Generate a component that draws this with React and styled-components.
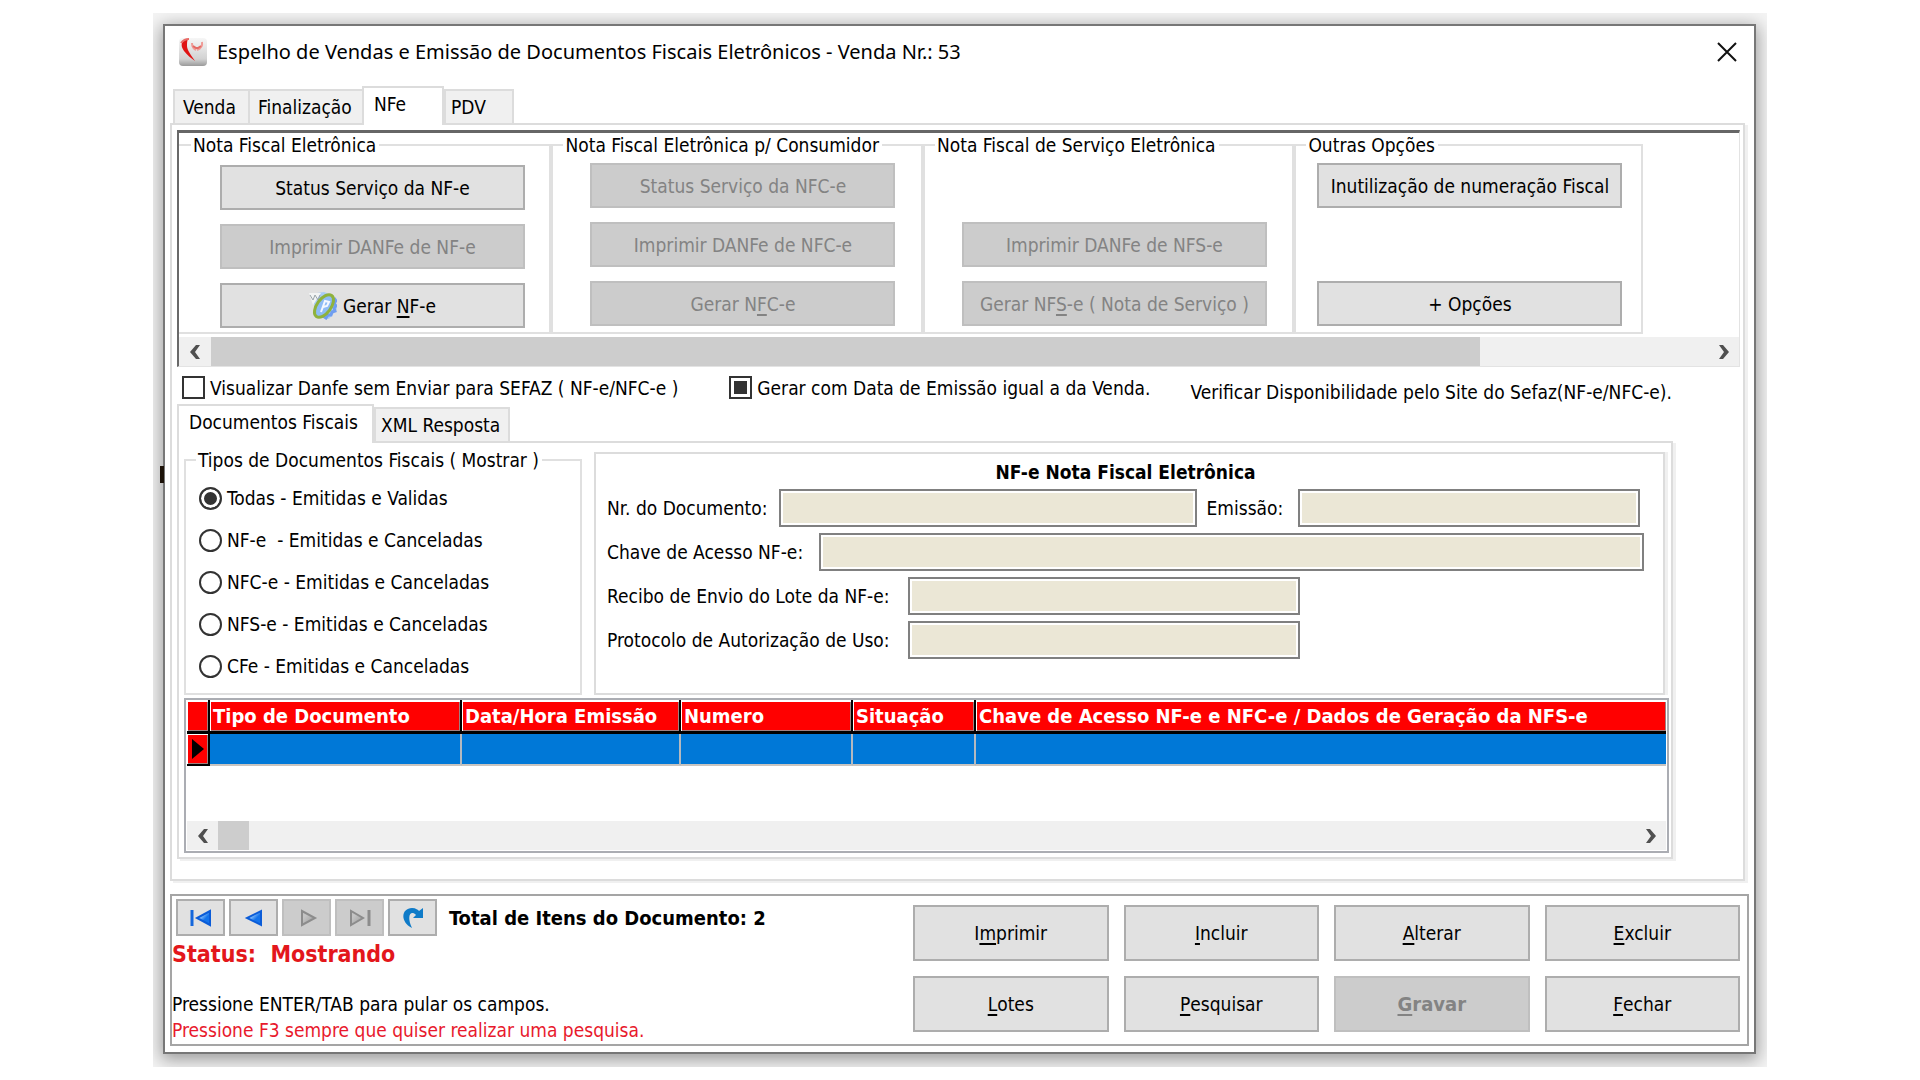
import React, { useState } from "react";
import styled, { createGlobalStyle, css } from "styled-components";

const Global = createGlobalStyle`
  * { box-sizing: border-box; }
  body {
    margin: 0;
    background: #fff;
    color: #000;
    font: 19px/24px "DejaVu Sans Condensed", "Noto Sans", sans-serif;
  }
  button, input { font: inherit; color: inherit; }
  u { text-decoration-thickness: 2px; text-underline-offset: 3px; text-decoration-skip-ink: none; }
`;

const Page = styled.div`
  padding: 13px 153px 14px;
`;

const Backdrop = styled.div`
  position: relative;
  overflow: hidden;
  padding: 11px 11px 13px 10px;
  background: #f4f4f4;
`;

const StrayMark = styled.span`
  position: absolute;
  left: 7px;
  top: 453px;
  width: 4px;
  height: 17px;
  background: #1c1208;
`;

const Window = styled.main`
  display: flex;
  flex-direction: column;
  border: 2px solid #777;
  background: #fff;
  box-shadow: 0 4px 16px 2px rgba(0, 0, 0, 0.36);
`;

const TitleBar = styled.header`
  display: flex;
  align-items: center;
  height: 60px;
  padding: 0 13px 8px;
`;

const Title = styled.h1`
  flex: 1;
  margin: 0 0 0 9px;
  font: 400 20px/28px "Noto Sans", sans-serif;
`;

const CloseButton = styled.button`
  display: flex;
  padding: 4px;
  border: 0;
  background: none;
`;

const TabList = styled.div`
  display: flex;
  align-items: flex-end;
  padding-left: ${(p) => p.$inset}px;
`;

const Tab = styled.button`
  width: ${(p) => p.$width}px;
  height: 34px;
  padding: 0 0 0 ${(p) => (p.$last ? 5 : 8)}px;
  border: 2px solid #dcdcdc;
  border-bottom: 0;
  border-right-width: ${(p) => (p.$last ? 2 : 0)}px;
  background: #f0f0f0;
  text-align: left;
  white-space: nowrap;
  ${(p) =>
    p.$active &&
    css`
      position: relative;
      height: 39px;
      margin-bottom: -2px;
      padding: 0 0 6px 10px;
      border-right-width: 2px;
      background: #fff;
    `}
`;

const TabPage = styled.section`
  margin: 0 9px 0 5px;
  padding: 5px 3px 20px 5px;
  border: 2px solid #dcdcdc;
  box-shadow: 3px 2px 0 #f0f0f0;
`;

const ScrollPane = styled.div`
  border: 1px solid #e3e3e3;
  border-top: 3px solid #666;
  border-left: 2px solid #696969;
`;

const Groups = styled.div`
  display: grid;
  grid-template-columns: 372fr 371fr 371fr 348fr 96fr;
  padding-bottom: 3px;
`;

const Group = styled.fieldset`
  display: grid;
  grid-template-rows: 45px 45px 45px;
  row-gap: 14px;
  min-width: 0;
  margin: 0;
  padding: ${(p) => p.$top || 6}px 0 4px ${(p) => p.$left}px;
  border: 2px solid #e0e0e0;
  border-left-width: ${(p) => (p.$open ? 0 : 2)}px;
`;

const Legend = styled.legend`
  margin-left: ${(p) => p.$shift}px;
  padding: 0 3px 0 2px;
  line-height: ${(p) => (p.$compact ? 20 : 24)}px;
  white-space: nowrap;
`;

const Button = styled.button`
  display: flex;
  align-items: center;
  justify-content: center;
  gap: 6px;
  width: ${(p) => (p.$fill ? "100%" : "305px")};
  height: 45px;
  padding: 0;
  grid-row: ${(p) => p.$row || "auto"};
  border: 2px solid #adadad;
  background: #e1e1e1;
  white-space: nowrap;
  &:disabled {
    border-color: #bfbfbf;
    background: #ccc;
    color: #838383;
  }
`;

const ScrollTrack = styled.div`
  display: grid;
  grid-template-columns: ${(p) => p.$columns};
  align-items: center;
  justify-items: center;
  height: 29px;
  background: #f0f0f0;
`;

const ScrollThumb = styled.span`
  align-self: stretch;
  justify-self: stretch;
  background: #cdcdcd;
`;

const OptionRow = styled.div`
  display: flex;
  align-items: center;
  height: 37px;
  padding: 4px 0 0 5px;
`;

const SiteNote = styled.span`
  padding-top: 8px;
  white-space: nowrap;
`;

const Choice = styled.label`
  display: flex;
  align-items: center;
  gap: 5px;
  margin-right: ${(p) => p.$after || 0}px;
  white-space: pre;
`;

const Mark = styled.input`
  appearance: none;
  width: 23px;
  height: 23px;
  margin: 0;
  border: 2px solid #333;
  border-radius: ${(p) => (p.type === "radio" ? "50%" : "0")};
  background: #fff;
  &:checked {
    background: #333;
    box-shadow: inset 0 0 0 3px #fff;
  }
`;

const SubTabs = styled.div`
  margin-right: 67px;
`;

const SubPage = styled.section`
  padding: 9px 2px 4px 5px;
  border: 2px solid #dcdcdc;
  box-shadow: 3px 2px 0 #f0f0f0;
`;

const Columns = styled.div`
  display: grid;
  grid-template-columns: 398px 1fr;
  column-gap: 12px;
  margin-right: 4px;
`;

const RadioGroup = styled.fieldset`
  display: flex;
  flex-direction: column;
  gap: 18px;
  margin: -2px 0 0;
  padding: 16px 0 15px 13px;
  border: 2px solid #e0e0e0;
`;

const Panel = styled.div`
  padding: 6px 19px 0 11px;
  border: 2px solid #dcdcdc;
  box-shadow: 3px 0 0 #f0f0f0;
`;

const PanelTitle = styled.h2`
  margin: 0 0 5px;
  font-size: 19px;
  line-height: 24px;
  text-align: center;
`;

const FieldRow = styled.div`
  display: grid;
  grid-template-columns: ${(p) => p.$columns};
  align-items: center;
  margin-bottom: 6px;
  white-space: nowrap;
`;

const FieldLabel = styled.label`
  padding-left: ${(p) => p.$inset || 0}px;
`;

const Field = styled.input`
  width: 100%;
  height: 38px;
  border: 2px solid #808080;
  background: #ebe7d6;
  box-shadow: inset 0 0 0 2px #fff;
`;

const GridBox = styled.div`
  margin-top: 3px;
  padding: 0 1px 1px;
  border: 2px solid #abadb3;
`;

const TableArea = styled.div`
  min-height: 121px;
`;

const Table = styled.table`
  width: 100%;
  table-layout: fixed;
  border-collapse: separate;
  border-spacing: 0;
`;

const HeadCell = styled.th`
  height: 34px;
  padding: 0 0 0 3px;
  border-right: ${(p) => (p.$last ? "0" : "2px solid #000")};
  border-bottom: 3px solid #000;
  background: #f00;
  box-shadow: inset 1px 2px 0 #fff, inset -1px -1px 0 #a08080;
  color: #fff;
  font-size: 20px;
  text-align: left;
  white-space: nowrap;
`;

const RowMarker = styled.th`
  height: 32px;
  padding: 0;
  border-right: 2px solid #000;
  border-bottom: 2px solid #000;
  background: #f00;
  box-shadow: inset 1px 1px 0 #fff, inset -1px -1px 0 #a08080;
  line-height: 0;
`;

const BodyCell = styled.td`
  padding: 0;
  border-right: ${(p) => (p.$last ? "0" : "2px solid #b4b9bf")};
  border-bottom: 2px solid #c8c4c0;
  background: #0078d7;
`;

const Footer = styled.footer`
  display: grid;
  grid-template-columns: 1fr 827px;
  margin: 13px 5px 6px;
  padding-right: 7px;
  border: 2px solid #a5a5a5;
`;

const FooterInfo = styled.div`
  display: flex;
  flex-direction: column;
  min-width: 0;
`;

const NavBar = styled.div`
  display: flex;
  align-items: center;
  gap: 4px;
  padding: 3px 0 0 4px;
`;

const NavButton = styled(Button)`
  width: 49px;
  height: 37px;
`;

const Total = styled.strong`
  margin-left: 8px;
  font-size: 20px;
  white-space: nowrap;
`;

const Status = styled.p`
  margin: 4px 0 0;
  color: #e3171b;
  font-weight: 700;
  font-size: 23px;
  line-height: 28px;
  white-space: pre;
`;

const Hint = styled.p`
  margin: ${(p) => p.$top}px 0 0;
  color: ${(p) => (p.$alert ? "#e8192c" : "#000")};
`;

const Actions = styled.div`
  display: grid;
  grid-template-columns: repeat(4, 1fr);
  gap: 15px;
  padding: 9px 0 12px;
`;

const ActionButton = styled(Button)`
  gap: 0;
  height: 56px;
  font-weight: ${(p) => (p.disabled ? 700 : 400)};
  font-size: ${(p) => (p.disabled ? 20 : 19)}px;
`;

const LogoIcon = () => (
  <svg width="30" height="30" viewBox="0 0 30 30" aria-hidden="true">
    <defs>
      <linearGradient id="logoFace" x1="0" y1="0" x2="0" y2="1">
        <stop offset="0" stopColor="#f6f6f6" />
        <stop offset="0.75" stopColor="#d2d2d2" />
        <stop offset="1" stopColor="#9a9a9a" />
      </linearGradient>
    </defs>
    <rect x="1" y="1" width="28" height="28" rx="4" fill="url(#logoFace)" />
    <path d="M10 2C3 4 2 8 6 14C9 18 13 21 17 24C13 18 9 13 9 9C9 6 9 4 10 2Z" fill="#e01414" />
    <path d="M3 6q3-4 8-4" fill="none" stroke="#e86a66" strokeWidth="2" />
    <path d="M14 6q0 5 4 7M24 5q1 6 -5 8" fill="none" stroke="#f09a96" strokeWidth="2" />
    <path d="M15 9l3 2 2 0 3-2" fill="none" stroke="#e46a64" strokeWidth="2" />
  </svg>
);

const NfeIcon = () => (
  <svg width="28" height="28" viewBox="0 0 28 28" aria-hidden="true">
    <path d="M1 2l14-2 10 4 3 13-8 10-10-2Z" fill="#a9cdf8" />
    <path d="M25 6l2 3-2 2 2 3-2 2 1 3-3 1-1 3-3 0-2 3-3-2" fill="none" stroke="#6f9df0" strokeWidth="3" />
    <path d="M0 1h12l-8 12Z" fill="#f2f4f4" />
    <path d="M1 3l3 5 2-5 3 5 2-5" fill="none" stroke="#9aa5ab" strokeWidth="1" />
    <ellipse cx="15" cy="14" rx="7" ry="13" transform="rotate(36 15 14)" fill="#8dbcf5" stroke="#8fb23c" strokeWidth="3" />
    <path d="M12 20l4-11 4 1-2 4-4 1" fill="none" stroke="#f4f8ff" strokeWidth="2" />
  </svg>
);

const CloseIcon = () => (
  <svg width="20" height="20" viewBox="0 0 20 20" aria-hidden="true">
    <path d="M1 1l18 18M19 1L1 19" stroke="#111" strokeWidth="2" />
  </svg>
);

const Chevron = ({ flip }) => (
  <svg width="12" height="14" viewBox="0 0 12 14" aria-hidden="true">
    <path d={flip ? "M1 0h4l6 7-6 7H1l5-7Z" : "M11 0H7L1 7l6 7h4L6 7Z"} fill="#505050" />
  </svg>
);

const NavIcon = ({ kind }) => {
  const blue = kind === "first" || kind === "prev";
  if (kind === "refresh")
    return (
      <svg width="22" height="22" viewBox="0 0 22 22" aria-hidden="true">
        <path d="M10 21C-3 14 0 1 10 1c4 0 6 2 7 3l4-3v10H11l3-3C9 3 4 8 10 21Z" fill="#0f7bc8" />
      </svg>
    );
  return (
    <svg width="22" height="18" viewBox="0 0 22 18" aria-hidden="true">
      <defs>
        <linearGradient id={"nav-" + kind} x1="0" y1="0" x2="1" y2="1">
          <stop offset="0.3" stopColor={blue ? "#9fd0ff" : "#c4c4c4"} />
          <stop offset="0.6" stopColor={blue ? "#1473ea" : "#b0b0b0"} />
        </linearGradient>
      </defs>
      {kind === "first" && <path d="M2 1v16" stroke="#1467dc" strokeWidth="3" />}
      {kind === "last" && <path d="M20 1v16" stroke="#8c8c8c" strokeWidth="3" />}
      {kind === "first" && <path d="M20 2v14L7 9Z" fill="url(#nav-first)" stroke="#0b5cd8" strokeWidth="2" />}
      {kind === "prev" && <path d="M18 2v14L4 9Z" fill="url(#nav-prev)" stroke="#0b5cd8" strokeWidth="2" />}
      {kind === "next" && <path d="M6 2v14L19 9Z" fill="url(#nav-next)" stroke="#8c8c8c" strokeWidth="2" />}
      {kind === "last" && <path d="M2 2v14L14 9Z" fill="url(#nav-last)" stroke="#8c8c8c" strokeWidth="2" />}
    </svg>
  );
};

const docTypes = [
  "Todas - Emitidas e Validas",
  "NF-e  - Emitidas e Canceladas",
  "NFC-e - Emitidas e Canceladas",
  "NFS-e - Emitidas e Canceladas",
  "CFe - Emitidas e Canceladas",
];

const navButtons = [
  { kind: "first", label: "Primeiro" },
  { kind: "prev", label: "Anterior" },
  { kind: "next", label: "Próximo", disabled: true },
  { kind: "last", label: "Último", disabled: true },
  { kind: "refresh", label: "Atualizar" },
];

const headers = [
  "Tipo de Documento",
  "Data/Hora Emissão",
  "Numero",
  "Situação",
  "Chave de Acesso NF-e e NFC-e / Dados de Geração da NFS-e",
];

export default function App() {
  const [docType, setDocType] = useState(0);
  const [preview, setPreview] = useState(false);
  const [sameDate, setSameDate] = useState(true);

  return (
    <Page>
      <Global />
      <Backdrop>
        <StrayMark />
        <Window>
          <TitleBar>
            <LogoIcon />
            <Title>Espelho de Vendas e Emissão de Documentos Fiscais Eletrônicos - Venda Nr.: 53</Title>
            <CloseButton aria-label="Fechar janela"><CloseIcon /></CloseButton>
          </TitleBar>

          <TabList role="tablist" $inset={8}>
            <Tab role="tab" $width={75}>Venda</Tab>
            <Tab role="tab" $width={114}>Finalização</Tab>
            <Tab role="tab" aria-selected="true" $width={82} $active>NFe</Tab>
            <Tab role="tab" $width={70} $last>PDV</Tab>
          </TabList>

          <TabPage>
            <ScrollPane>
              <Groups>
                <Group $left={41} $top={8} $open>
                  <Legend $shift={-29}>Nota Fiscal Eletrônica</Legend>
                  <Button>Status Serviço da NF-e</Button>
                  <Button disabled>Imprimir DANFe de NF-e</Button>
                  <Button><NfeIcon /><span>Gerar <u>N</u>F-e</span></Button>
                </Group>
                <Group $left={37}>
                  <Legend $shift={-27}>Nota Fiscal Eletrônica p/ Consumidor</Legend>
                  <Button disabled>Status Serviço da NFC-e</Button>
                  <Button disabled>Imprimir DANFe de NFC-e</Button>
                  <Button disabled><span>Gerar N<u>F</u>C-e</span></Button>
                </Group>
                <Group $left={37}>
                  <Legend $shift={-27}>Nota Fiscal de Serviço Eletrônica</Legend>
                  <Button disabled $row={2}>Imprimir DANFe de NFS-e</Button>
                  <Button disabled $row={3}><span>Gerar NF<u>S</u>-e ( Nota de Serviço )</span></Button>
                </Group>
                <Group $left={21}>
                  <Legend $shift={-11}>Outras Opções</Legend>
                  <Button>Inutilização de numeração Fiscal</Button>
                  <Button $row={3}>+ Opções</Button>
                </Group>
              </Groups>
              <ScrollTrack $columns="32px 1269fr 228fr 31px">
                <Chevron />
                <ScrollThumb />
                <span />
                <Chevron flip />
              </ScrollTrack>
            </ScrollPane>

            <OptionRow>
              <Choice $after={51}>
                <Mark type="checkbox" checked={preview} onChange={() => setPreview(!preview)} />
                Visualizar Danfe sem Enviar para SEFAZ ( NF-e/NFC-e )
              </Choice>
              <Choice $after={40}>
                <Mark type="checkbox" checked={sameDate} onChange={() => setSameDate(!sameDate)} />
                Gerar com Data de Emissão igual a da Venda.
              </Choice>
              <SiteNote>Verificar Disponibilidade pelo Site do Sefaz(NF-e/NFC-e).</SiteNote>
            </OptionRow>

            <SubTabs>
              <TabList role="tablist" $inset={0}>
                <Tab role="tab" aria-selected="true" $width={197} $active>Documentos Fiscais</Tab>
                <Tab role="tab" $width={136} $last>XML Resposta</Tab>
              </TabList>
              <SubPage>
                <Columns>
                  <RadioGroup>
                    <Legend $shift={-3} $compact>Tipos de Documentos Fiscais ( Mostrar )</Legend>
                    {docTypes.map((text, i) => (
                      <Choice key={text}>
                        <Mark type="radio" name="tipo" checked={docType === i} onChange={() => setDocType(i)} />
                        {text}
                      </Choice>
                    ))}
                  </RadioGroup>
                  <Panel>
                    <PanelTitle>NF-e Nota Fiscal Eletrônica</PanelTitle>
                    <FieldRow $columns="172px 417fr 101px 342fr 4fr">
                      <FieldLabel htmlFor="numero">Nr. do Documento:</FieldLabel>
                      <Field id="numero" readOnly />
                      <FieldLabel htmlFor="emissao" $inset={10}>Emissão:</FieldLabel>
                      <Field id="emissao" readOnly />
                    </FieldRow>
                    <FieldRow $columns="212px 1fr">
                      <FieldLabel htmlFor="chave">Chave de Acesso NF-e:</FieldLabel>
                      <Field id="chave" readOnly />
                    </FieldRow>
                    <FieldRow $columns="301px 391fr 344fr">
                      <FieldLabel htmlFor="recibo">Recibo de Envio do Lote da NF-e:</FieldLabel>
                      <Field id="recibo" readOnly />
                    </FieldRow>
                    <FieldRow $columns="301px 391fr 344fr">
                      <FieldLabel htmlFor="protocolo">Protocolo de Autorização de Uso:</FieldLabel>
                      <Field id="protocolo" readOnly />
                    </FieldRow>
                  </Panel>
                </Columns>

                <GridBox>
                  <TableArea>
                    <Table>
                      <colgroup>
                        <col width="23" />
                        <col width="252" />
                        <col width="219" />
                        <col width="172" />
                        <col width="123" />
                        <col />
                      </colgroup>
                      <thead>
                        <tr>
                          <HeadCell aria-label="Registro atual" />
                          {headers.map((text, i) => (
                            <HeadCell key={text} $last={i === headers.length - 1}>{text}</HeadCell>
                          ))}
                        </tr>
                      </thead>
                      <tbody>
                        <tr>
                          <RowMarker>
                            <svg width="12" height="20" viewBox="0 0 12 20" aria-hidden="true"><path d="M0 0l12 10L0 20Z" /></svg>
                          </RowMarker>
                          {headers.map((text, i) => (
                            <BodyCell key={text} $last={i === headers.length - 1} />
                          ))}
                        </tr>
                      </tbody>
                    </Table>
                  </TableArea>
                  <ScrollTrack $columns="31px 31fr 1384fr 31px">
                    <Chevron />
                    <ScrollThumb />
                    <span />
                    <Chevron flip />
                  </ScrollTrack>
                </GridBox>
              </SubPage>
            </SubTabs>
          </TabPage>

          <Footer>
            <FooterInfo>
              <NavBar>
                {navButtons.map((b) => (
                  <NavButton key={b.kind} aria-label={b.label} disabled={b.disabled}>
                    <NavIcon kind={b.kind} />
                  </NavButton>
                ))}
                <Total>Total de Itens do Documento: 2</Total>
              </NavBar>
              <Status>Status:  Mostrando</Status>
              <Hint $top={24}>Pressione ENTER/TAB para pular os campos.</Hint>
              <Hint $top={2} $alert>Pressione F3 sempre que quiser realizar uma pesquisa.</Hint>
            </FooterInfo>
            <Actions>
              <ActionButton $fill>I<u>m</u>primir</ActionButton>
              <ActionButton $fill><u>I</u>ncluir</ActionButton>
              <ActionButton $fill><u>A</u>lterar</ActionButton>
              <ActionButton $fill><u>E</u>xcluir</ActionButton>
              <ActionButton $fill><u>L</u>otes</ActionButton>
              <ActionButton $fill><u>P</u>esquisar</ActionButton>
              <ActionButton $fill disabled><u>G</u>ravar</ActionButton>
              <ActionButton $fill><u>F</u>echar</ActionButton>
            </Actions>
          </Footer>
        </Window>
      </Backdrop>
    </Page>
  );
}
